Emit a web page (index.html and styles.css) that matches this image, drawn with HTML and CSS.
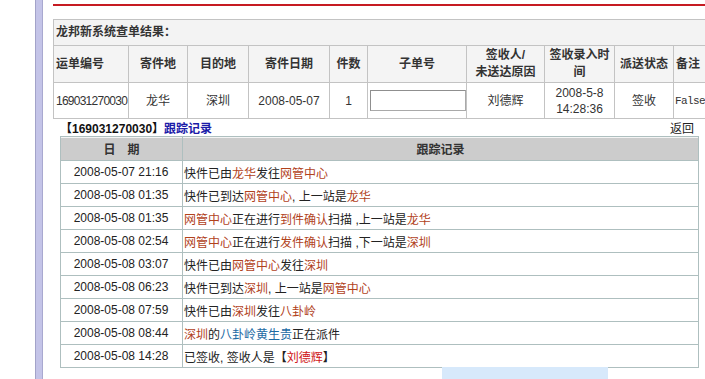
FILE: index.html
```html
<!DOCTYPE html>
<html lang="zh-CN">
<head>
<meta charset="utf-8">
<title>龙邦新系统查单结果</title>
<link rel="stylesheet" href="styles.css">
</head>
<body>
<div class="page">
  <div class="gutter"></div>
  <div class="rail"></div>
  <div class="content">
    <div class="redline"></div>
    <table class="result">
      <colgroup>
        <col class="c1"><col class="c2"><col class="c3"><col class="c4"><col class="c5">
        <col class="c6"><col class="c7"><col class="c8"><col class="c9"><col class="c10">
      </colgroup>
      <tr class="title-row"><td colspan="10">龙邦新系统查单结果：</td></tr>
      <tr class="head-row">
        <th class="left">运单编号</th>
        <th>寄件地</th>
        <th>目的地</th>
        <th>寄件日期</th>
        <th>件数</th>
        <th>子单号</th>
        <th>签收人/<br>未送达原因</th>
        <th>签收录入时间</th>
        <th>派送状态</th>
        <th class="left">备注</th>
      </tr>
      <tr class="data-row">
        <td class="left waybill">169031270030</td>
        <td>龙华</td>
        <td>深圳</td>
        <td>2008-05-07</td>
        <td>1</td>
        <td><input class="sub-input" type="text"></td>
        <td>刘德辉</td>
        <td>2008-5-8<br>14:28:36</td>
        <td>签收</td>
        <td class="left mono">False</td>
      </tr>
    </table>

    <div class="track">
      <div class="track-head">
        <span class="track-title">【169031270030】<a class="track-link" href="#">跟踪记录</a></span>
        <a class="back" href="#">返回</a>
      </div>
      <table class="trace">
        <colgroup><col class="t1"><col class="t2"></colgroup>
        <tr><th>日　期</th><th>跟踪记录</th></tr>
        <tr><td class="date">2008-05-07 21:16</td><td>快件已由<span class="pl">龙华</span>发往<span class="pl">网管中心</span></td></tr>
        <tr><td class="date">2008-05-08 01:35</td><td>快件已到达<span class="pl">网管中心</span>, 上一站是<span class="pl">龙华</span></td></tr>
        <tr><td class="date">2008-05-08 01:35</td><td><span class="pl">网管中心</span>正在进行<span class="pl">到件确认</span>扫描 ,上一站是<span class="pl">龙华</span></td></tr>
        <tr><td class="date">2008-05-08 02:54</td><td><span class="pl">网管中心</span>正在进行<span class="pl">发件确认</span>扫描 ,下一站是<span class="pl">深圳</span></td></tr>
        <tr><td class="date">2008-05-08 03:07</td><td>快件已由<span class="pl">网管中心</span>发往<span class="pl">深圳</span></td></tr>
        <tr><td class="date">2008-05-08 06:23</td><td>快件已到达<span class="pl">深圳</span>, 上一站是<span class="pl">网管中心</span></td></tr>
        <tr><td class="date">2008-05-08 07:59</td><td>快件已由<span class="pl">深圳</span>发往<span class="pl">八卦岭</span></td></tr>
        <tr><td class="date">2008-05-08 08:44</td><td><span class="pl">深圳</span>的<span class="courier">八卦岭黄生贵</span>正在派件</td></tr>
        <tr><td class="date">2008-05-08 14:28</td><td>已签收, 签收人是【<span class="signer">刘德辉</span>】</td></tr>
      </table>
    </div>
  </div>
</div>
<div class="tip"></div>
</body>
</html>
```

FILE: styles.css
```css
html, body {
  margin: 0;
  padding: 0;
  overflow: hidden;
  background: #fff;
}
body {
  position: relative;
  font-family: "Liberation Sans", "Noto Sans CJK SC", sans-serif;
  font-size: 12px;
  color: #222;
}
.page {
  display: flex;
  min-height: 379px;
}
.gutter {
  flex: none;
  width: 35px;
}
.rail {
  flex: none;
  width: 6px;
  background: #c4c4e8;
  border-left: 1px solid #a3a3c9;
  border-right: 1px solid #a9a9d0;
}
.content {
  flex: none;
  width: 652px;
  padding: 4px 0 0 10px;
}
.redline {
  height: 2px;
  background: #c61b22;
  margin-bottom: 13px;
}

/* main result table */
.result {
  border-collapse: collapse;
  table-layout: fixed;
  width: 680px;
  color: #333;
}
.c1 { width: 75px; }
.c2 { width: 59px; }
.c3 { width: 61px; }
.c4 { width: 81px; }
.c5 { width: 38px; }
.c6 { width: 99px; }
.c7 { width: 78px; }
.c8 { width: 70px; }
.c9 { width: 59px; }
.c10 { width: 60px; }
.result td, .result th {
  border: 1px solid #c3c3c3;
  padding: 0 2px;
  text-align: center;
  vertical-align: middle;
  line-height: 17px;
  overflow: hidden;
}
.result th {
  font-weight: bold;
  background: #f4f4f4;
}
.result .left { text-align: left; }
.title-row td {
  height: 25px;
  text-align: left;
  font-weight: bold;
  background: #f3f3f3;
  font-size: 12px;
}
.head-row th { height: 36px; }
.data-row td { height: 35px; line-height: 16px; }
.waybill { letter-spacing: -0.75px; white-space: nowrap; }
.result td.mono {
  font-family: "Liberation Mono", monospace;
  font-size: 11px;
  letter-spacing: -0.6px;
  white-space: nowrap;
  overflow: visible;
  padding-left: 1px;
}
.sub-input {
  box-sizing: border-box;
  width: 96px;
  height: 21px;
  margin: 0;
  padding: 0;
  border: 1px solid #a9a9a9;
  border-top-color: #8f8f8f;
  border-left-color: #8f8f8f;
  background: #fff;
  display: block;
}

/* tracking section */
.track {
  width: 638px;
  margin: 0 auto;
}
.track-head {
  display: flex;
  justify-content: space-between;
  align-items: center;
  height: 17px;
  padding: 0 4px 0 0;
}
.track-title {
  font-weight: bold;
  color: #111;
}
.track-link {
  color: #1b1ba8;
  text-decoration: none;
}
.back {
  color: #222;
  text-decoration: none;
}
.trace {
  width: 638px;
  border-collapse: collapse;
  table-layout: fixed;
}
.t1 { width: 122px; }
.t2 { width: 516px; }
.trace th, .trace td {
  border: 1px solid #aebfbf;
  padding: 0 2px;
  height: 22px;
  white-space: nowrap;
}
.trace th {
  background: #cccccc;
  color: #333;
  font-weight: bold;
  text-align: center;
  height: 23px;
  box-shadow: inset 0 1px 0 #f4f4f4;
}
.trace td { padding-left: 1px; }
.trace td.date {
  text-align: center;
  color: #222;
}
.pl { color: #b1421c; }
.courier { color: #1d6aa3; }
.signer { color: #cf1414; }

.tip {
  position: absolute;
  left: 442px;
  top: 367px;
  width: 166px;
  height: 12px;
  background: #d7e9fb;
}
```
